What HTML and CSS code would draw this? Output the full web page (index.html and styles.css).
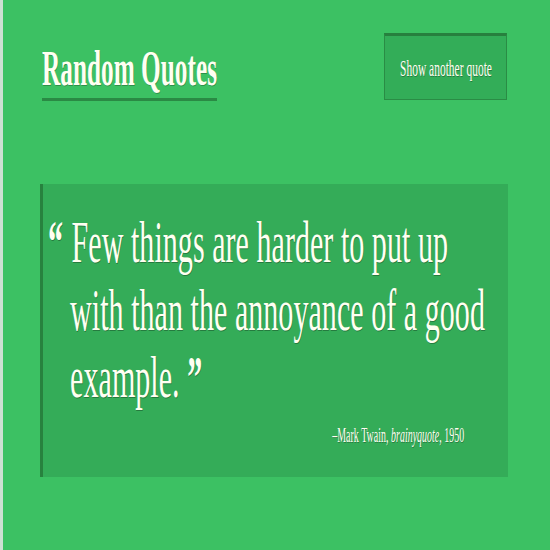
FILE: index.html
```html
<!DOCTYPE html>
<html lang="en">
<head>
<meta charset="utf-8">
<title>Random Quotes</title>
<link rel="stylesheet" href="styles.css">
</head>
<body>
<div class="page">
  <header class="header">
    <h1 class="title"><span class="title-text">Random Quotes</span></h1>
    <button class="next-btn" type="button"><span class="next-label">Show another quote</span></button>
  </header>
  <blockquote class="quote">
    <p class="quote-text"><span class="mark open">“</span> Few things are harder to put up<br>with than the annoyance of a good<br>example. <span class="mark">”</span></p>
    <p class="source"><span class="source-inner">–Mark Twain, <cite>brainyquote</cite>, 1950</span></p>
  </blockquote>
</div>
</body>
</html>
```

FILE: styles.css
```css
html, body {
  margin: 0;
  padding: 0;
}

body {
  width: 550px;
  height: 550px;
  overflow: hidden;
  font-family: "Liberation Serif", "Times New Roman", serif;
  color: #fffff2;
}

.page {
  box-sizing: border-box;
  width: 550px;
  height: 550px;
  background: #3cc163;
  border-left: 3px solid #cde0d2;
}

.header {
  display: flex;
  justify-content: space-between;
  align-items: flex-start;
  padding: 33px 43px 0 39px;
}

.title {
  flex: none;
  width: 175px;
  margin: 10px 0 0;
  padding-bottom: 5px;
  font-size: 50px;
  line-height: 50px;
  font-weight: bold;
  white-space: nowrap;
  border-bottom: 3px solid #2a8a44;
}

.title-text {
  display: inline-block;
  margin-right: -175px;
  transform: scaleX(0.506);
  transform-origin: left top;
  text-shadow: 1px 1px 0 rgba(0, 0, 0, 0.25);
}

.next-btn {
  flex: none;
  box-sizing: border-box;
  width: 123px;
  height: 67px;
  display: flex;
  align-items: center;
  justify-content: center;
  padding: 2px 0 0;
  background: #33ad58;
  border: 1px solid #2a8c45;
  border-top: 3px solid #27803e;
  color: #fffff2;
  font-family: "Liberation Serif", "Times New Roman", serif;
  font-size: 23px;
  line-height: 23px;
  cursor: pointer;
  overflow: visible;
}

.next-label {
  display: inline-block;
  flex: none;
  white-space: nowrap;
  transform: scaleX(0.5);
  transform-origin: center;
  text-shadow: 1px 1px 0 rgba(0, 0, 0, 0.3);
}

.quote {
  box-sizing: border-box;
  width: 468px;
  height: 293px;
  margin: 83px 0 0 37px;
  padding: 25px 0 0 5px;
  background: #34ac58;
  border-left: 3px solid #27823e;
  overflow: hidden;
}

.quote-text {
  margin: 0;
  padding-left: 44px;
  text-indent: -44px;
  font-size: 60px;
  line-height: 67.5px;
  white-space: nowrap;
  transform: scaleX(0.502);
  transform-origin: left top;
  text-shadow: 1px 1px 0 rgba(0, 0, 0, 0.3);
}

.mark {
  font-weight: bold;
}

.mark.open {
  margin-right: 2px;
}

.source {
  margin: 11px 0 0;
  padding-right: 44px;
  text-align: right;
  font-size: 20px;
  line-height: 24px;
  white-space: nowrap;
}

.source-inner {
  display: inline-block;
  transform: scaleX(0.5);
  transform-origin: right top;
  text-shadow: 1px 1px 0 rgba(0, 0, 0, 0.3);
}

.source cite {
  font-style: italic;
}
```
